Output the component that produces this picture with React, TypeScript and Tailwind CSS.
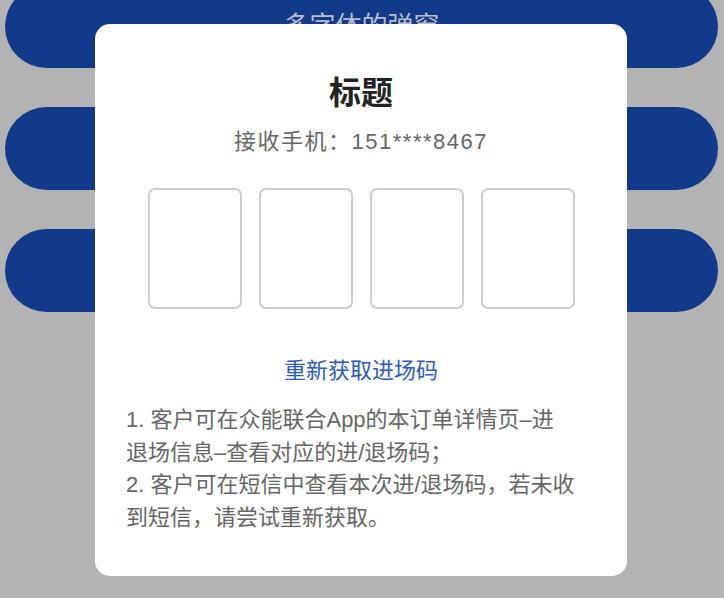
const font = { fontFamily: '"Liberation Sans", "Noto Sans CJK SC", sans-serif' }

function BgButton({ label }: { label?: string }) {
  return (
    <div className="h-[83px] mx-[5px] rounded-full bg-[#123a8a] flex items-center justify-center text-[26px] text-[#b9bdc8]">
      {label}
    </div>
  )
}

export default function App() {
  return (
    <div className="relative w-[724px] h-[598px] overflow-hidden bg-[#b3b3b3]" style={font}>
      {/* page behind the overlay */}
      <div className="-mt-[15px] flex flex-col gap-[39px] pr-[1px]">
        <BgButton label="多字体的弹窗" />
        <BgButton />
        <BgButton />
      </div>

      {/* dialog */}
      <div className="absolute left-[95px] top-[24px] w-[532px] h-[552px] bg-white rounded-[15px] pt-[47px] px-[31px] flex flex-col items-center">
        <div className="text-[32px] leading-[44px] font-bold text-[#222]">标题</div>
        <div className="mt-[12px] text-[22px] leading-[30px] text-[#666] tracking-[1.5px]">接收手机：151****8467</div>

        <div className="mt-[31px] flex gap-[17px]">
          {[0, 1, 2, 3].map((i) => (
            <div key={i} className="w-[94px] h-[121px] rounded-[7px] border-2 border-[#cdcdcd]" />
          ))}
        </div>

        <div className="mt-[47px] text-[22px] leading-[30px] text-[#2a5bc3]">重新获取进场码</div>

        <div className="mt-[18px] self-start w-[470px] text-[22px] leading-[32.5px] text-[#666]">
          <p>
            1. 客户可在众能联合App的本订单详情页–进
            <br />
            退场信息–查看对应的进/退场码；
          </p>
          <p>
            2. 客户可在短信中查看本次进/退场码，若未收
            <br />
            到短信，请尝试重新获取。
          </p>
        </div>
      </div>
    </div>
  )
}
